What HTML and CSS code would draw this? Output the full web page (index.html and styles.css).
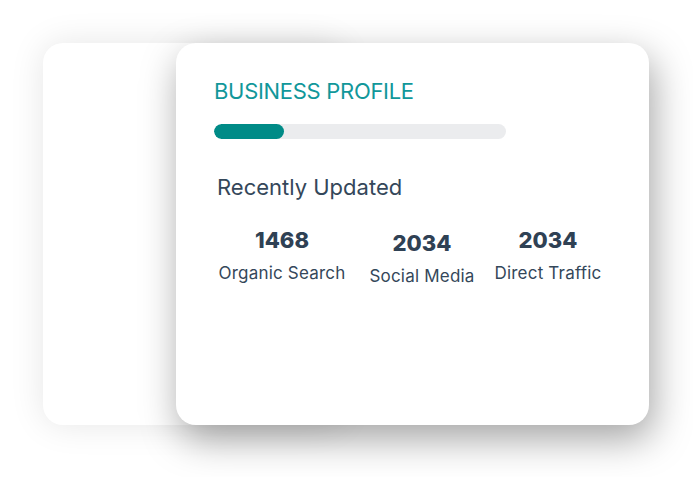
FILE: index.html
```html
<!DOCTYPE html>
<html lang="en">

<head>
    <meta charset="UTF-8">
    <meta name="viewport" content="width=device-width, initial-scale=1.0">
    <title>Business Profile</title>
    <link rel="stylesheet" href="styles.css">
</head>

<body>
    <div class="stack">
        <div class="card card--back"></div>
        <div class="card card--front">
            <h2 class="profile__title">BUSINESS PROFILE</h2>
            <div class="profile__bar">
                <div class="profile__fill" style="width: 24%"></div>
            </div>
            <h3 class="profile__subtitle">Recently Updated</h3>
            <div class="stats">
                <div class="stats__item stats__item--first">
                    <span class="stats__value">1468</span>
                    <span class="stats__label">Organic Search</span>
                </div>
                <div class="stats__item stats__item--low">
                    <span class="stats__value">2034</span>
                    <span class="stats__label">Social Media</span>
                </div>
                <div class="stats__item stats__item--last">
                    <span class="stats__value">2034</span>
                    <span class="stats__label">Direct Traffic</span>
                </div>
            </div>
        </div>
    </div>
</body>

</html>
```

FILE: styles.css
```css
body {
    margin: 0;
    background: #ffffff;
    font-family: "Inter", "Open Sans", sans-serif;
    color: #34475a;
}

/* stack */
.stack {
    display: grid;
    width: 606px;
    padding: 43px 0 52px 43px;
}

.card {
    grid-area: 1 / 1;
    height: 382px;
    background: #ffffff;
    border-radius: 20px;
}

.card--back {
    width: 300px;
    box-shadow: 0 0 34px rgba(0, 0, 0, 0.1);
}

.card--front {
    margin-left: 133px;
    box-sizing: border-box;
    padding: 35px 38px 0 38px;
    box-shadow: 4px 14px 38px rgba(0, 0, 0, 0.36);
}

/* profile */
.profile__title {
    margin: 0;
    font-size: 22px;
    font-weight: 400;
    line-height: 27px;
    color: #11979a;
    letter-spacing: -0.3px;
}

.profile__bar {
    margin-top: 19px;
    width: 292px;
    height: 15px;
    border-radius: 8px;
    background: #ebecee;
    overflow: hidden;
}

.profile__fill {
    height: 100%;
    border-radius: 8px;
    background: #008b87;
}

.profile__subtitle {
    margin: 35px 0 0 3px;
    font-size: 22px;
    font-weight: 400;
    line-height: 26px;
    color: #34475a;
}

/* stats */
.stats {
    display: flex;
    margin-top: 26px;
}

.stats__item {
    display: flex;
    flex-direction: column;
    align-items: center;
}

.stats__item--first {
    width: 136px;
}

.stats__item--low {
    margin-top: 3px;
    width: 144px;
}

.stats__item--last {
    width: 108px;
}

.stats__value {
    font-size: 22px;
    font-weight: 800;
    line-height: 28px;
    color: #2f4154;
}

.stats__label {
    margin-top: 8px;
    font-size: 17px;
    line-height: 22px;
    letter-spacing: 0.2px;
    color: #34475a;
}
```
